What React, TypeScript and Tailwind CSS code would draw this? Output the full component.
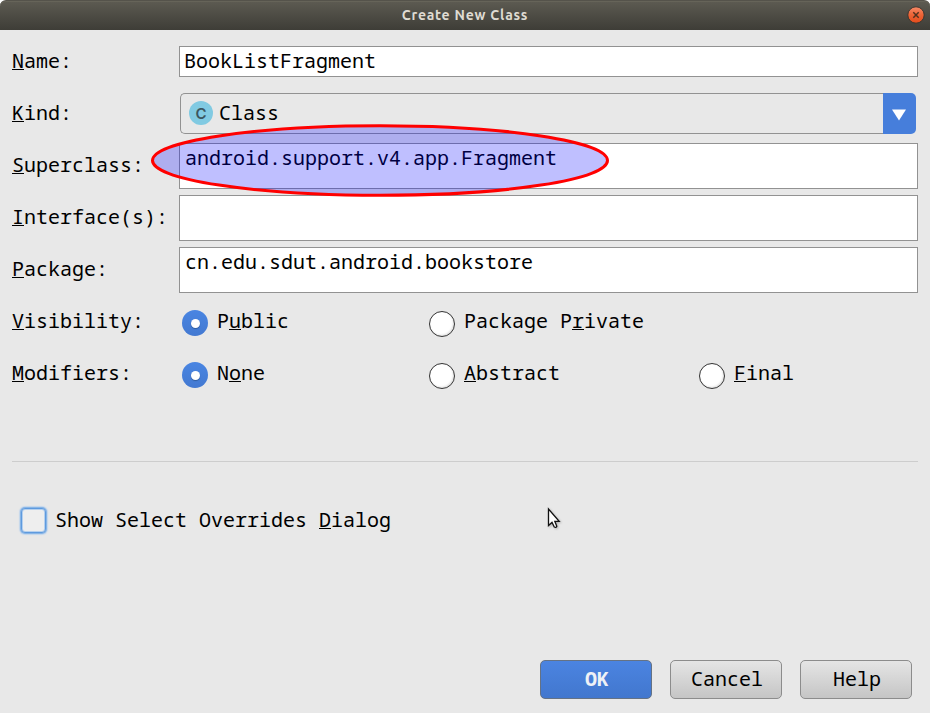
import type { ReactNode } from "react";

const mono = "font-['Noto_Sans_Mono','DejaVu_Sans_Mono',monospace]";

// Text with one underlined shortcut letter.
function Mnemonic({ text, at }: { text: string; at: number }) {
  return (
    <span className="whitespace-pre">
      {text.slice(0, at)}
      <span className="inline-block h-[23px] border-b border-black leading-[28px]">{text[at]}</span>
      {text.slice(at + 1)}
    </span>
  );
}

function Row({ label, children }: { label: string; children: ReactNode }) {
  return (
    <div className="flex h-[52px] items-start">
      <div className="w-[167px] shrink-0 pt-[12px] leading-[28px]">
        <Mnemonic text={label} at={0} />
      </div>
      {children}
    </div>
  );
}

function Area({ value }: { value: string }) {
  return (
    <div className="mt-1 h-[46px] w-[739px] border border-[#929292] bg-white pl-[5px] leading-[28px]">{value}</div>
  );
}

function Radio({ text, at, checked = false }: { text: string; at: number; checked?: boolean }) {
  return (
    <div className="flex items-start">
      {checked ? (
        <span className="mt-[15px] flex size-[26px] items-center justify-center rounded-full bg-linear-to-b from-[#4985e2] to-[#4379d1]">
          <span className="mt-px ml-px size-[9px] rounded-full bg-white shadow-[0_1px_1px_#315c9e]" />
        </span>
      ) : (
        <span className="mt-[16px] size-[26px] rounded-full border border-[#333] bg-white shadow-[inset_-1px_-1px_2px_#ddd]" />
      )}
      <span className="ml-[9px] pt-[12px] leading-[28px]">
        <Mnemonic text={text} at={at} />
      </span>
    </div>
  );
}

function Button({ text, primary = false }: { text: string; primary?: boolean }) {
  return (
    <button
      className={
        primary
          ? "h-[39px] w-[112px] rounded-[5px] border border-[#657284] bg-linear-to-b from-[#4b84e1] to-[#4277ce] pb-[2px] pl-[2px] leading-[35px] font-bold text-[#eef1f6]"
          : "h-[39px] w-[112px] rounded-[5px] border border-[#8c8c8c] bg-linear-to-b from-[#e5e5e5] to-[#c5c5c5] pb-[2px] pl-[2px] leading-[35px]"
      }
    >
      {text}
    </button>
  );
}

export default function App() {
  return (
    <div className={`relative flex h-[713px] w-[930px] flex-col overflow-hidden bg-[#e8e8e8] text-[20px] text-black ${mono}`}>
      <header className="flex h-[30px] shrink-0 bg-white">
        <div className="flex w-full items-center rounded-t-[6px] border-t border-[#55534b] bg-linear-to-b from-[#5d5b52] to-[#3e3d37] pb-[2px] shadow-[inset_0_1px_0_#666459]">
          <div className="w-[28px]" />
          <div className="flex-1 pt-[2px] text-center font-['Ubuntu','Noto_Sans',sans-serif] text-[14px] leading-[25px] font-bold tracking-[0.75px] text-[#dfdbd2]">
            Create New Class
          </div>
          <div className="flex w-[28px] items-center pl-[5px]">
            <svg width="18" height="18" viewBox="0 0 18 18">
              <defs>
                <linearGradient id="close" x1="0" y1="0" x2="0" y2="1">
                  <stop offset="0" stopColor="#f68b69" />
                  <stop offset="0.5" stopColor="#ed6335" />
                  <stop offset="1" stopColor="#e24b1b" />
                </linearGradient>
              </defs>
              <circle cx="9" cy="9" r="8.2" fill="url(#close)" stroke="#393630" strokeWidth="1" />
              <path d="M6.3 6.3l5.4 5.4M11.7 6.3l-5.4 5.4" stroke="#51311f" strokeWidth="1.5" />
            </svg>
          </div>
        </div>
      </header>

      <main className="px-3 pt-[5px]">
        <Row label="Name:">
          <div className="mt-[11px] h-[31px] w-[739px] border border-[#929292] bg-white pl-[4px] leading-[28px]">
            BookListFragment
          </div>
        </Row>
        <Row label="Kind:">
          <div className="mt-[6px] ml-px flex h-[41px] w-[736px]">
            <div className="flex flex-1 items-center rounded-l-[5px] border border-r-0 border-[#929292] pl-[8px]">
              <span className="-mt-px flex size-[24px] items-center justify-center rounded-full bg-[#81cae2] font-['Inter',sans-serif] text-[15px] leading-none font-semibold text-[#3c5660]">
                C
              </span>
              <span className="ml-[6px] -mt-px leading-[28px]">Class</span>
            </div>
            <div className="flex w-[33px] items-center justify-center rounded-r-[5px] bg-[#467edb]">
              <svg className="-ml-px mt-[2px]" width="14" height="12" viewBox="0 0 14 12">
                <path d="M0 .5h14L7 11.5z" fill="#fff" />
              </svg>
            </div>
          </div>
        </Row>
        <Row label="Superclass:">
          <Area value="android.support.v4.app.Fragment" />
        </Row>
        <Row label="Interface(s):">
          <Area value="" />
        </Row>
        <Row label="Package:">
          <Area value="cn.edu.sdut.android.bookstore" />
        </Row>
        <Row label="Visibility:">
          <div className="ml-[3px] grid grid-cols-[247px_270px_200px]">
            <Radio text="Public" at={1} checked />
            <Radio text="Package Private" at={9} />
          </div>
        </Row>
        <Row label="Modifiers:">
          <div className="ml-[3px] grid grid-cols-[247px_270px_200px]">
            <Radio text="None" at={1} checked />
            <Radio text="Abstract" at={0} />
            <Radio text="Final" at={0} />
          </div>
        </Row>
        <div className="mt-[62px] border-t border-[#cdcdcd]" />
        <div className="mt-[44px] flex pl-[7px]">
          <span className="mt-[2px] ml-[2px] size-[25px] rounded-[4px] border border-[#5e9ade] bg-[#eee] shadow-[0_0_0_1px_#88b5e6,0_0_1px_2px_#c3d6ec,inset_0_0_0_1px_#b5d0ee]" />
          <span className="ml-[9px] leading-[28px]">
            <Mnemonic text="Show Select Overrides Dialog" at={22} />
          </span>
        </div>
      </main>

      <footer className="mt-auto flex justify-end gap-[18px] pr-[18px] pb-[14px]">
        <Button text="OK" primary />
        <Button text="Cancel" />
        <Button text="Help" />
      </footer>

      {/* Highlight ring over the superclass field */}
      <svg className="absolute top-[120px] left-[148px]" width="466" height="80" viewBox="0 0 466 80">
        <ellipse cx="232" cy="40.5" rx="227.5" ry="34.8" fill="#0000ff" fillOpacity="0.25" stroke="#ff0000" strokeWidth="3" />
      </svg>
      {/* Mouse pointer */}
      <svg className="absolute top-[507px] left-[547px] drop-shadow-[1px_1px_1px_rgba(0,0,0,0.25)]" width="16" height="23" viewBox="0 0 16 23">
        <path d="M1.5 2v16.6l3.5-3.2 2.3 4.6q1.8 1 2.5-.7L7.8 14.3h4.4z" fill="#fff" stroke="#111" strokeWidth="1.3" />
      </svg>
    </div>
  );
}
